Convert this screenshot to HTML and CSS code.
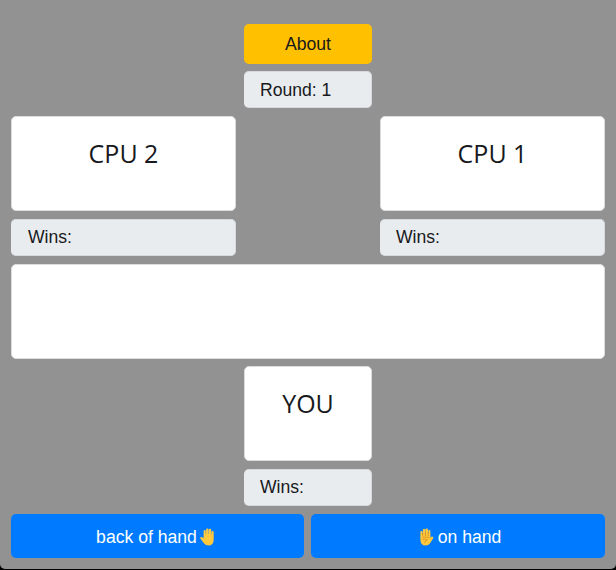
FILE: index.html
```html
<!DOCTYPE html>
<html lang="en">
<head>
<meta charset="utf-8">
<title>Hand game</title>
<link rel="stylesheet" href="styles.css">
</head>
<body>
<main class="game">
  <button class="about">About</button>
  <div class="info round">Round: 1</div>
  <section class="players">
    <div class="player"><div class="card">CPU 2</div><div class="info info-left">Wins:</div></div>
    <div class="player"><div class="card">CPU 1</div><div class="info">Wins:</div></div>
  </section>
  <div class="card table"></div>
  <section class="player you"><div class="card">YOU</div><div class="info">Wins:</div></section>
  <div class="actions">
    <button class="choice back"><span>back of hand</span>
      <svg class="hand" viewBox="0 0 16 18"><path d="M3.600 10V3.400q0-1.300 1.100-1.300t1.100 1.300V6h.3V1.800q0-1.300 1.200-1.300t1.200 1.300V6h.3V2q0-1.200 1.200-1.200T11.200 2v4.500h.3V4q0-1.100 1.100-1.100T13.700 4v7.500q0 6-5.400 6-2.600 0-4.100-2L.6 11Q-.2 9.600.9 9.100q1-.4 1.700.4z"/></svg>
    </button>
    <button class="choice palm">
      <svg class="hand" viewBox="0 0 16 18"><path d="M12.400 10 13 9q.8-.8 1.700-.3 1.100.7.2 2l-3 4.800q-1.500 2-4.100 2-5.400 0-5.400-6V4q0-1.100 1.100-1.100T4.600 4v2.500h.3V2Q4.900.8 6.100.8T7.300 2v4h.3V1.800Q7.600.5 8.800.5T10 1.800V6h.3V3.400q0-1.300 1.050-1.300T12.400 3.400z"/><path class="crease" d="M4 9.200h6.500l.8 1.500M4.500 11.500q3-1 5 .2-2.500.5-3 3.300M4.750 5v3M7.450 4v4M10.150 4v4"/></svg>
      <span>on hand</span>
    </button>
  </div>
</main>
</body>
</html>
```

FILE: styles.css
```css
* { box-sizing: border-box; }
html { background: #000; }
body { margin: 0; font-family: "Liberation Sans", Arial, sans-serif; font-size: 17.6px; color: #17191c; }
.game {
  height: 569px;
  padding: 24px 11px 0;
  display: flex;
  flex-direction: column;
  align-items: center;
  gap: 8px;
  background: #929292;
  border-radius: 0 0 5px 5px;
}
button { border: 0; padding: 0; font: inherit; color: inherit; border-radius: 5px; }
.about { width: 128px; height: 40px; background: #ffc000; }
.info {
  width: 100%;
  height: 37px;
  padding-left: 16px;
  display: flex;
  align-items: center;
  background: #e9ecef;
  border: 1px solid #d6dade;
  border-left-width: 0;
  border-radius: 5px;
}
.info-left { padding-left: 17px; }
.round { width: 128px; margin-top: -1px; padding-top: 2px; }
.players { width: 100%; display: flex; justify-content: space-between; }
.player { width: 225px; display: flex; flex-direction: column; gap: 8px; }
.player.you { width: 128px; }
.card {
  width: 100%;
  height: 95px;
  padding-top: 18px;
  background: #fff;
  border: 1px solid #dcdcdf;
  border-radius: 5px;
  font-family: "Open Sans", "Noto Sans", sans-serif;
  font-size: 25px;
  line-height: 36px;
  text-align: center;
}
.you { margin-top: -1px; }
.actions { width: 100%; display: grid; grid-template-columns: 293px 294px; gap: 7px; }
.choice {
  height: 44px;
  padding-top: 2px;
  display: flex;
  align-items: center;
  justify-content: center;
  gap: 4px;
  background: #007bff;
  color: #fff;
}
.back { padding-right: 3px; gap: 3px; }
.palm { padding-left: 3px; }
.hand { width: 16px; height: 18px; fill: #ffc83d; }
.crease { fill: none; stroke: #d58b20; stroke-width: .8; }
```
